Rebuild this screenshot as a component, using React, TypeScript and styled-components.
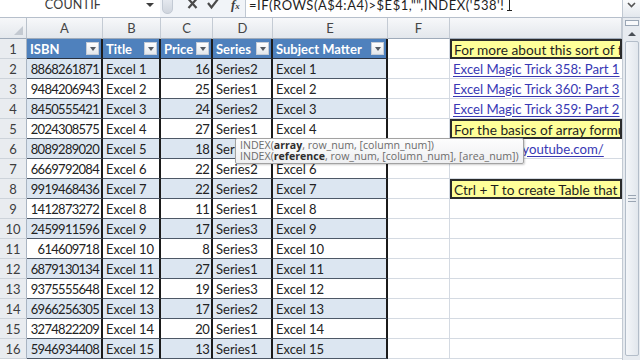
import React, { ReactElement } from 'react';
import styled, { createGlobalStyle } from 'styled-components';

const GlobalStyle = createGlobalStyle`
	html, body {
		margin: 0;
		padding: 0;
		background: #ffffff;
	}
	body {
		font-family: 'Lato', 'Liberation Sans', sans-serif;
	}
`;

const Frame = styled.div`
	width: 640px;
	height: 360px;
	overflow: hidden;
	display: flex;
	flex-direction: column;
	background: #ffffff;
	font-family: 'Lato', 'Liberation Sans', sans-serif;
`;

const FormulaBar = styled.div`
	height: 17px;
	flex: none;
	display: flex;
	align-items: flex-start;
	border-bottom: 1px solid #b6bfcb;
	background: #f1f4f8;
	overflow: hidden;
`;

const NameBox = styled.div`
	width: 160px;
	height: 100%;
	display: flex;
	align-items: flex-start;
	background: #ffffff;
	color: #3a3a3a;
	font-size: 12.5px;
	line-height: 10px;
`;

const NameText = styled.span`
	flex: 1;
	text-align: center;
	letter-spacing: 0.2px;
`;

const DropArrow = styled.span`
	width: 0;
	height: 0;
	margin: 3px 6px 0 0;
	border-left: 4px solid transparent;
	border-right: 4px solid transparent;
	border-top: 4px solid #3d3d3d;
`;

const Pill = styled.div`
	width: 9px;
	height: 14px;
	margin: -2px 0 0 2px;
	border-radius: 0 0 5px 5px;
	background: linear-gradient(#e6eaf0, #cfd5dd);
	border: 1px solid #c3cad4;
`;

const IconGroup = styled.div`
	width: 72px;
	height: 100%;
	display: flex;
	align-items: flex-start;
	gap: 9px;
	padding-left: 14px;
	box-sizing: border-box;
`;

const Fx = styled.span`
	font-family: 'Liberation Serif', serif;
	font-style: italic;
	font-weight: bold;
	font-size: 13px;
	line-height: 10px;
	color: #3f3f3f;
	margin-left: 3px;

	& sub {
		font-size: 9px;
		vertical-align: 0;
	}
`;

const FormulaInput = styled.div`
	flex: 1;
	height: 100%;
	background: #ffffff;
	border-left: 1px solid #c0c8d2;
	padding-left: 3px;
	display: flex;
	align-items: flex-start;
	font-size: 13px;
	line-height: 10px;
	color: #1e1e1e;
	white-space: nowrap;
	letter-spacing: 0.52px;
`;

const Caret = styled.span`
	display: inline-block;
	width: 1px;
	height: 13px;
	margin: -2px 0 0 5px;
	background: #202020;
	position: relative;

	&::after {
		content: '';
		position: absolute;
		left: -2px;
		bottom: 0;
		width: 5px;
		height: 1px;
		background: #202020;
	}
`;

const ExpandButton = styled.div`
	width: 18px;
	height: 100%;
	box-sizing: border-box;
	border-left: 1px solid #c0c8d2;
	background: linear-gradient(#fafbfc, #e3e8ee);
	display: flex;
	justify-content: center;
	padding-top: 2px;
`;

const Main = styled.div`
	flex: 1;
	display: flex;
	min-height: 0;
`;

const Sheet = styled.div`
	flex: 1;
	position: relative;
	display: grid;
	grid-template-columns: 27px 76px 58px 52px 60px 115px 62px 1fr;
	grid-template-rows: 21px;
	grid-auto-rows: 20px;
	font-size: 13px;
	color: #222222;
	overflow: hidden;
`;

const cellBase = `
	box-sizing: border-box;
	display: flex;
	align-items: center;
	white-space: nowrap;
	overflow: hidden;
	min-width: 0;
`;

const Corner = styled.div`
	${cellBase}
	position: relative;
	background: linear-gradient(#f6f7f9, #e4e8ed);
	border-right: 1px solid #b9c1cb;
	border-bottom: 1px solid #9fabba;

	&::after {
		content: '';
		position: absolute;
		right: 3px;
		bottom: 3px;
		border-left: 9px solid transparent;
		border-bottom: 9px solid #c3c9d1;
	}
`;

const ColHead = styled.div`
	${cellBase}
	justify-content: center;
	background: linear-gradient(#f7f8fa, #e3e7ec);
	border-right: 1px solid #c4cbd4;
	border-bottom: 1px solid #9fabba;
	color: #454545;
	font-size: 13px;
`;

const RowHead = styled.div`
	${cellBase}
	justify-content: center;
	background: #e9ecf0;
	border-right: 1px solid #a9b4c2;
	border-bottom: 1px solid #cdd3da;
	color: #3d3d3d;
	font-size: 13px;
`;

const HeadCell = styled.div`
	${cellBase}
	justify-content: space-between;
	background: #4f81bd;
	color: #ffffff;
	font-weight: bold;
	padding-left: 3px;
	border-right: 2px solid #1b1b1b;
	border-bottom: 1px solid #2a3240;
`;

const FilterButton = styled.span`
	flex: none;
	width: 13px;
	height: 13px;
	margin-right: 2px;
	box-sizing: border-box;
	border: 1px solid #c5ccd6;
	background: linear-gradient(#ffffff, #e3e7ec);
	display: flex;
	align-items: center;
	justify-content: center;

	&::after {
		content: '';
		border-left: 3.5px solid transparent;
		border-right: 3.5px solid transparent;
		border-top: 4px solid #555b63;
	}
`;

const DataCell = styled.div<{ $band: boolean; $num?: boolean }>`
	${cellBase}
	justify-content: ${(p) => (p.$num ? 'flex-end' : 'flex-start')};
	padding: ${(p) => (p.$num ? '0 2px 0 0' : '0 0 0 3px')};
	letter-spacing: ${(p) => (p.$num ? '-0.72px' : '0')};
	background: ${(p) => (p.$band ? '#dce6f1' : '#ffffff')};
	border-right: 2px solid #1b1b1b;
	border-bottom: 1px solid #4d5867;
`;

const PlainCell = styled.div`
	${cellBase}
	border-right: 1px solid #d4dae2;
	border-bottom: 1px solid #d4dae2;
`;

const NoteCell = styled.div<{ $kind: 'note' | 'link' | 'empty' }>`
	${cellBase}
	padding-left: ${(p) => (p.$kind === 'note' ? '2px' : '3px')};
	background: ${(p) => (p.$kind === 'note' ? '#ffff99' : '#ffffff')};
	border: ${(p) => (p.$kind === 'note' ? '2px solid #2b2b2b' : 'none')};
	border-bottom: ${(p) => (p.$kind === 'note' ? '2px solid #2b2b2b' : '1px solid #d4dae2')};
	color: ${(p) => (p.$kind === 'link' ? '#3838b4' : '#1e1e1e')};
	font-size: ${(p) => (p.$kind === 'note' ? '13.7px' : '13.2px')};
	text-decoration: ${(p) => (p.$kind === 'link' ? 'underline' : 'none')};
	text-underline-offset: 2px;
`;

const Tooltip = styled.div`
	position: absolute;
	left: 235px;
	top: 120px;
	width: 289px;
	height: 26px;
	box-sizing: border-box;
	padding: 1px 0 0 4px;
	border: 1px solid #a2a2a2;
	border-radius: 2px;
	background: linear-gradient(#fdfdfd, #eeeff1);
	box-shadow: 1px 1px 2px rgba(0, 0, 0, 0.2);
	font-family: 'Open Sans', 'Noto Sans', sans-serif;
	font-size: 10.6px;
	line-height: 11px;
	color: #6c6c6c;
	white-space: nowrap;
	z-index: 5;

	& b {
		color: #2e2e2e;
	}
`;

const VScroll = styled.div`
	width: 18px;
	flex: none;
	display: flex;
	flex-direction: column;
	align-items: center;
	background: #e7ebf0;
	border-left: 1px solid #c3cad3;
	box-sizing: border-box;
`;

const SplitBox = styled.div`
	width: 12px;
	height: 4px;
	margin-top: 2px;
	border: 1px solid #9aa6b5;
	background: #f8f9fb;
`;

const UpArrow = styled.div`
	margin-top: 6px;
	border-left: 4px solid transparent;
	border-right: 4px solid transparent;
	border-bottom: 4px solid #4a4f56;
`;

const Thumb = styled.div`
	flex: 1;
	width: 14px;
	margin: 5px 0 4px;
	box-sizing: border-box;
	border: 1px solid #b3bdc9;
	border-radius: 2px;
	background: linear-gradient(90deg, #f4f6f9, #e2e7ed);
	display: flex;
	align-items: center;
	justify-content: center;
`;

const Grip = styled.div`
	width: 8px;
	height: 7px;
	background: repeating-linear-gradient(#9aa5b3 0 1px, transparent 1px 3px);
`;

type Row = [string, string, string, string, string];

const header = ['ISBN', 'Title', 'Price', 'Series', 'Subject Matter'];

const rows: Row[] = [
	['8868261871', 'Excel 1', '16', 'Series2', 'Excel 1'],
	['9484206943', 'Excel 2', '25', 'Series1', 'Excel 2'],
	['8450555421', 'Excel 3', '24', 'Series2', 'Excel 3'],
	['2024308575', 'Excel 4', '27', 'Series1', 'Excel 4'],
	['8089289020', 'Excel 5', '18', 'Series3', 'Excel 5'],
	['6669792084', 'Excel 6', '22', 'Series2', 'Excel 6'],
	['9919468436', 'Excel 7', '22', 'Series2', 'Excel 7'],
	['1412873272', 'Excel 8', '11', 'Series1', 'Excel 8'],
	['2459911596', 'Excel 9', '17', 'Series3', 'Excel 9'],
	['614609718', 'Excel 10', '8', 'Series3', 'Excel 10'],
	['6879130134', 'Excel 11', '27', 'Series1', 'Excel 11'],
	['9375555648', 'Excel 12', '19', 'Series3', 'Excel 12'],
	['6966256305', 'Excel 13', '17', 'Series2', 'Excel 13'],
	['3274822209', 'Excel 14', '20', 'Series1', 'Excel 14'],
	['5946934408', 'Excel 15', '13', 'Series1', 'Excel 15'],
];

type Note = { kind: 'note' | 'link' | 'empty'; text?: string };

const notes: Note[] = [
	{ kind: 'note', text: 'For more about this sort of formula, see:' },
	{ kind: 'link', text: 'Excel Magic Trick 358: Part 1' },
	{ kind: 'link', text: 'Excel Magic Trick 360: Part 3' },
	{ kind: 'link', text: 'Excel Magic Trick 359: Part 2' },
	{ kind: 'note', text: 'For the basics of array formulas, see:' },
	{ kind: 'link', text: 'http://www.youtube.com/' },
	{ kind: 'empty' },
	{ kind: 'note', text: 'Ctrl + T to create Table that expands' },
];

const CloseIcon = () => (
	<svg width="11" height="10" viewBox="0 0 11 10">
		<path d="M1.5 -1 L9.5 8 M9.5 -1 L1.5 8" stroke="#4a4a4a" strokeWidth="2.2" />
	</svg>
);

const CheckIcon = () => (
	<svg width="12" height="10" viewBox="0 0 12 10">
		<path d="M1 3 L4.5 7.5 L11 -1" stroke="#4a4a4a" strokeWidth="2.2" fill="none" />
	</svg>
);

const Chevron = () => (
	<svg width="9" height="6" viewBox="0 0 9 6">
		<path d="M1 1 L4.5 4.5 L8 1" stroke="#555" strokeWidth="1.6" fill="none" />
	</svg>
);

export default function App(): ReactElement {
	const letters = ['A', 'B', 'C', 'D', 'E', 'F', ''];

	return (
		<Frame>
			<GlobalStyle />
			<FormulaBar>
				<NameBox>
					<NameText>COUNTIF</NameText>
					<DropArrow />
				</NameBox>
				<Pill />
				<IconGroup>
					<CloseIcon />
					<CheckIcon />
					<Fx>
						f<sub>x</sub>
					</Fx>
				</IconGroup>
				<FormulaInput>
					=IF(ROWS(A$4:A4)&gt;$E$1,"",INDEX('538'!
					<Caret />
				</FormulaInput>
				<ExpandButton>
					<Chevron />
				</ExpandButton>
			</FormulaBar>
			<Main>
				<Sheet>
					<Corner />
					{letters.map((l, i) => (
						<ColHead key={i}>{l}</ColHead>
					))}

					<RowHead>1</RowHead>
					{header.map((h) => (
						<HeadCell key={h}>
							{h}
							<FilterButton />
						</HeadCell>
					))}
					<PlainCell />
					<NoteCell $kind={notes[0].kind}>{notes[0].text}</NoteCell>

					{rows.map((r, i) => {
						const band = i % 2 === 0;
						const note = notes[i + 1] ?? { kind: 'empty' };
						return (
							<React.Fragment key={i}>
								<RowHead>{i + 2}</RowHead>
								<DataCell $band={band} $num>
									{r[0]}
								</DataCell>
								<DataCell $band={band}>{r[1]}</DataCell>
								<DataCell $band={band} $num>
									{r[2]}
								</DataCell>
								<DataCell $band={band}>{r[3]}</DataCell>
								<DataCell $band={band}>{r[4]}</DataCell>
								<PlainCell />
								<NoteCell $kind={note.kind}>{note.text}</NoteCell>
							</React.Fragment>
						);
					})}

					<Tooltip>
						INDEX(<b>array</b>, row_num, [column_num])
						<br />
						INDEX(<b>reference</b>, row_num, [column_num], [area_num])
					</Tooltip>
				</Sheet>
				<VScroll>
					<SplitBox />
					<UpArrow />
					<Thumb>
						<Grip />
					</Thumb>
				</VScroll>
			</Main>
		</Frame>
	);
}
